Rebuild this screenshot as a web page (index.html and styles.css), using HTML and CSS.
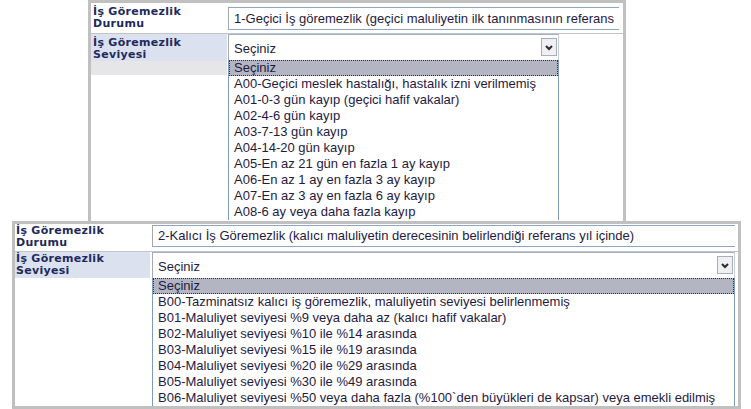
FILE: index.html
```html
<!DOCTYPE html>
<html lang="tr">
<head>
<meta charset="utf-8">
<title>İş Göremezlik</title>
<link rel="stylesheet" href="styles.css">
</head>
<body>
<div class="page">
  <section class="panel panel-a">
    <div class="row row-status">
      <div class="label">İş Göremezlik<br>Durumu</div>
      <div class="value">
        <div class="textbox">1-Geçici İş göremezlik (geçici maluliyetin ilk tanınmasının referans</div>
      </div>
    </div>
    <div class="row row-level">
      <div class="label-col">
        <div class="label label-alt">İş Göremezlik<br>Seviyesi</div>
        <div class="band"></div>
      </div>
      <div class="value">
        <div class="select">
          <span class="select-text">Seçiniz</span>
          <span class="arrow"><svg width="14" height="16" viewBox="0 0 14 16"><polyline points="4,7 7,10 10,7" fill="none" stroke="#2b2b2b" stroke-width="2"/></svg></span>
        </div>
        <ul class="options">
          <li class="selected">Seçiniz</li>
          <li>A00-Geçici meslek hastalığı, hastalık izni verilmemiş</li>
          <li>A01-0-3 gün kayıp (geçici hafif vakalar)</li>
          <li>A02-4-6 gün kayıp</li>
          <li>A03-7-13 gün kayıp</li>
          <li>A04-14-20 gün kayıp</li>
          <li>A05-En az 21 gün en fazla 1 ay kayıp</li>
          <li>A06-En az 1 ay en fazla 3 ay kayıp</li>
          <li>A07-En az 3 ay en fazla 6 ay kayıp</li>
          <li>A08-6 ay veya daha fazla kayıp</li>
        </ul>
      </div>
    </div>
  </section>
  <section class="panel panel-b">
    <div class="row row-status">
      <div class="label">İş Göremezlik<br>Durumu</div>
      <div class="value">
        <div class="textbox">2-Kalıcı İş Göremezlik (kalıcı maluliyetin derecesinin belirlendiği referans yıl içinde)</div>
      </div>
    </div>
    <div class="row row-level">
      <div class="label-col">
        <div class="label label-alt">İş Göremezlik<br>Seviyesi</div>
      </div>
      <div class="value">
        <div class="select">
          <span class="select-text">Seçiniz</span>
          <span class="arrow"><svg width="14" height="16" viewBox="0 0 14 16"><polyline points="4,7 7,10 10,7" fill="none" stroke="#2b2b2b" stroke-width="2"/></svg></span>
        </div>
        <ul class="options">
          <li class="selected">Seçiniz</li>
          <li>B00-Tazminatsız kalıcı iş göremezlik, maluliyetin seviyesi belirlenmemiş</li>
          <li>B01-Maluliyet seviyesi %9 veya daha az (kalıcı hafif vakalar)</li>
          <li>B02-Maluliyet seviyesi %10 ile %14 arasında</li>
          <li>B03-Maluliyet seviyesi %15 ile %19 arasında</li>
          <li>B04-Maluliyet seviyesi %20 ile %29 arasında</li>
          <li>B05-Maluliyet seviyesi %30 ile %49 arasında</li>
          <li>B06-Maluliyet seviyesi %50 veya daha fazla (%100`den büyükleri de kapsar) veya emekli edilmiş</li>
        </ul>
      </div>
    </div>
  </section>
</div>
</body>
</html>
```

FILE: styles.css
```css
* { box-sizing: border-box; }

html, body {
  margin: 0;
  padding: 0;
  background: #ffffff;
}

body {
  width: 751px;
  height: 409px;
  overflow: hidden;
  font-family: "Liberation Sans", Arial, sans-serif;
  font-size: 13px;
  color: #1f1a3f;
}

.page {
  display: flex;
  flex-direction: column;
  align-items: flex-start;
}

.panel {
  background: #ffffff;
  border: 3px solid #c0c0c0;
  overflow: hidden;
  display: flex;
  flex-direction: column;
}

.panel-a {
  margin-left: 88px;
  width: 538px;
  height: 221px;
  border-bottom: 0;
}

.panel-b {
  margin-left: 12px;
  width: 729px;
  height: 188px;
}

.row {
  display: flex;
  align-items: flex-start;
}

.row-status {
  border-bottom: 1px solid #c4c4c8;
}

.panel-a .row-status { height: 31px; }
.panel-b .row-status { height: 28px; }

.label,
.label-col {
  flex: none;
}

.panel-a .label,
.panel-a .label-col { width: 136px; }

.panel-b .label,
.panel-b .label-col { width: 135px; }

.label {
  font-family: "DejaVu Sans", Verdana, sans-serif;
  font-weight: bold;
  font-size: 11px;
  letter-spacing: 0.3px;
  line-height: 12px;
  color: #1e2a5c;
  white-space: nowrap;
}

.panel-a .label { padding: 3px 0 0 2px; height: 30px; }
.panel-b .label { padding: 1px 0 0 1px; height: 27px; }

.label-alt {
  background: #dbe1ee;
}

.panel-a .label-alt { height: 27px; padding-top: 3px; }
.panel-b .label-alt { height: 26px; padding-top: 1px; }

.band {
  height: 14px;
  background: #e6e6e8;
}

.value {
  flex: 1;
  min-width: 0;
}

.panel-a .value { margin-left: 1px; }
.panel-b .value { margin-left: 2px; margin-right: 3px; }

.textbox {
  border-top: 1px solid #8fa6c2;
  border-bottom: 1px solid #8fa6c2;
  border-left: 1px solid #a8a8b0;
  padding-left: 5px;
  white-space: nowrap;
  overflow: hidden;
}

.panel-a .textbox {
  margin-top: 4px;
  margin-right: 4px;
  height: 23px;
  line-height: 21px;
}

.panel-b .textbox {
  margin-top: 1px;
  height: 22px;
  line-height: 20px;
}

.select {
  display: flex;
  align-items: flex-start;
  height: 26px;
  padding: 3px 1px 0 5px;
  border-top: 1px solid #9fb2ca;
  border-left: 1px solid #a8a8b0;
  border-right: 1px solid #c8d0dc;
  background: #ffffff;
}

.panel-a .select,
.panel-a .options { width: 331px; }

.select-text {
  padding-top: 3px;
  line-height: 15px;
}

.arrow {
  margin-left: auto;
  width: 16px;
  height: 18px;
  border: 1px solid #a9b0bd;
  background: #eef0f4;
  display: flex;
  align-items: center;
  justify-content: center;
}

.arrow svg { display: block; }

.options {
  list-style: none;
  margin: 0;
  padding: 0;
  border-left: 1px solid #7f9db9;
  border-right: 1px solid #7f9db9;
}

.panel-b .options {
  border-bottom: 1px solid #7f9db9;
}

.options li {
  height: 16px;
  line-height: 16px;
  padding-left: 5px;
  white-space: nowrap;
  overflow: hidden;
}

.options li.selected {
  background: #b3b6c2;
  border: 1px dotted #303030;
  line-height: 14px;
  padding-left: 4px;
}
```
